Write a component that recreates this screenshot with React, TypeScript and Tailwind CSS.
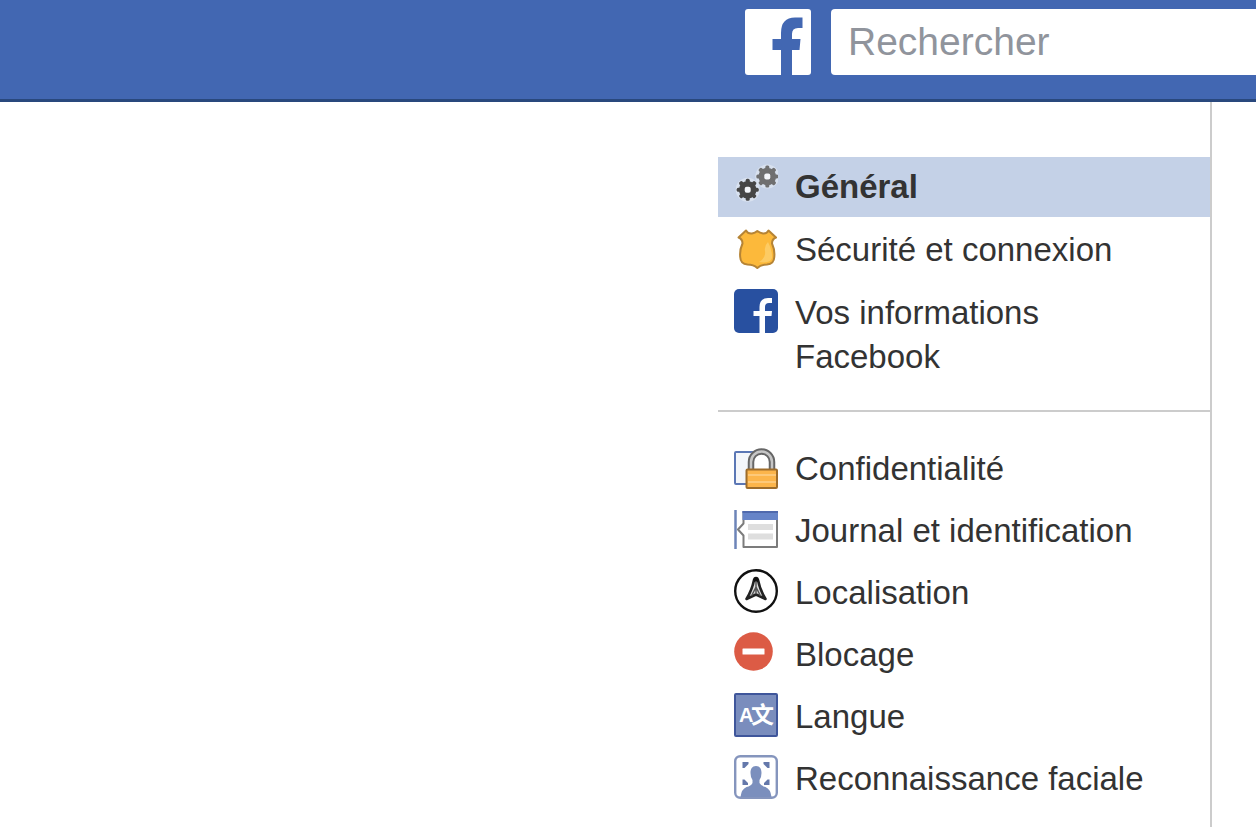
import { ComponentType } from 'react';

function GearsIcon() {
  const teeth = [0, 45, 90, 135];

  const gear = (cx: number, cy: number, color: string) => (
    <g transform={`translate(${cx} ${cy})`}>
      <circle r="12" fill="#fff" opacity="0.35" />
      <circle r="8.8" fill={color} />
      {teeth.map((deg) => (
        <rect
          key={deg}
          x="-2"
          y="-11"
          width="4"
          height="22"
          rx="1.5"
          fill={color}
          transform={`rotate(${deg})`}
        />
      ))}
      <rect x="-3" y="-3" width="6" height="6" rx="2" fill="#f4f6fa" />
    </g>
  );

  return (
    <>
      {gear(33.3, 13.5, '#6f6f70')}
      {gear(13.7, 26.7, '#464646')}
    </>
  );
}

function BadgeIcon() {
  return (
    <>
      <path
        d="M12 4.5 Q14 8 18 7.5 Q21 7 23.3 5 Q26 7 29 7.5 Q32.500 8 34.500 4.500 L42 11.500 Q38 13 38 17.500 Q41 24 40.300 31 Q40 38 33 38.500 Q27 38.500 23.300 42 Q19.500 38.500 13.500 38.500 Q6.500 38 6.200 31 Q5.500 24 8.500 17.500 Q8.500 13 4.500 11.500 Z"
        fill="#fcb93b"
        stroke="#b68435"
        strokeWidth="2"
        strokeLinejoin="round"
      />
      <path
        d="M34 16 Q38.500 25 38 32 Q37 36 30 36.500 L25 36 Q32 32 31 25 Q30 20 34 16 Z"
        fill="#fdcb63"
      />
    </>
  );
}

function FacebookIcon() {
  return (
    <>
      <rect width="44" height="44" rx="5" fill="#2850a0" />
      <path
        d="M25.500 44 V27 H19.500 V22 H25.500 V18 Q25.500 9 34 9 H38 V14 H35 Q31 14 31 18 V22 H38 L37.500 27 H31 V44 Z"
        fill="#fff"
      />
    </>
  );
}

function LockIcon() {
  return (
    <>
      <rect x="1" y="7" width="20" height="32" rx="1" fill="#f4f6fa" stroke="#5b77b5" strokeWidth="2" />
      <path d="M14 25 V16 A13.500 12 0 0 1 41 16 V25 Z" fill="#fff" />
      <path d="M17 25 V17 A10.500 10.500 0 0 1 38 17 V25" fill="none" stroke="#666" strokeWidth="6.500" />
      <path d="M17 24 V17 A10.500 10.500 0 0 1 38 17 V24" fill="none" stroke="#c6c6c6" strokeWidth="2.500" />
      <rect x="12.500" y="24.500" width="30.500" height="18.500" rx="1" fill="#fcb54b" stroke="#9d6c2b" strokeWidth="2" />
      <path d="M14 30 H42 M14 37 H42" stroke="#fdd08a" strokeWidth="1.500" />
    </>
  );
}

function JournalIcon() {
  return (
    <>
      <path d="M1.500 3 V42" stroke="#6d84b8" strokeWidth="2.500" />
      <path
        d="M9.500 5 H43 V40 H9.500 V28.500 L4 22.500 L9.500 16.500 Z"
        fill="#fff"
        stroke="#7c7c7c"
        strokeWidth="2"
        strokeLinejoin="round"
      />
      <path d="M8.500 4 H44 V13 H8.500 Z" fill="#6684c8" />
      <path d="M8.500 5 H44" stroke="#4f69ad" strokeWidth="2" />
      <path d="M14 20 H39 M14 29.500 H39" stroke="#dedede" strokeWidth="6" />
    </>
  );
}

function LocationIcon() {
  return (
    <>
      <circle cx="22" cy="22" r="20.800" fill="#fff" stroke="#111" strokeWidth="2.400" />
      <path
        d="M22 9.500 L20 11 Q18 21 12.500 30 L22 25.500 L31.500 30 Q26 21 24 11 Z"
        fill="#ddd"
        stroke="#222"
        strokeWidth="2.600"
        strokeLinejoin="round"
      />
      <circle cx="22" cy="10.500" r="2.800" fill="#111" />
      <path d="M22 12 V25 M22 18 L17.500 27 M22 18 L26.500 27" stroke="#555" strokeWidth="1.500" />
    </>
  );
}

function BlockIcon() {
  return (
    <>
      <circle cx="19.500" cy="20.500" r="19.300" fill="#dc5b45" />
      <rect x="8.500" y="17.500" width="22" height="6" rx="0.500" fill="#fff" />
    </>
  );
}

function LanguageIcon() {
  return (
    <>
      <rect x="1" y="1" width="42" height="42" rx="1" fill="#7a8dbd" stroke="#3f569b" strokeWidth="2" />
      <text
        x="5"
        y="29"
        fill="#fff"
        className="font-['Liberation_Sans',sans-serif] text-[20px] font-bold">
        A
      </text>
      <text
        x="17"
        y="30"
        fill="#fff"
        className="font-['Noto_Sans_CJK_SC',sans-serif] text-[23px] font-bold">
        文
      </text>
    </>
  );
}

function FaceIcon() {
  return (
    <>
      <rect x="1.200" y="1.200" width="41.600" height="41.600" rx="5" fill="#fff" stroke="#8595bd" strokeWidth="2.400" />
      <path
        d="M8.500 13 V7 H14.500 V9 L10.500 13 Z M35.500 13 V7 H29.500 V9 L33.500 13 Z M8.500 24.500 V30 H14 V28 L10.500 24.500 Z M35.500 24.500 V30 H30 V28 L33.500 24.500 Z"
        fill="#6478ab"
      />
      <path
        d="M22 11 C26 11 27.500 14 27.500 18 Q27.500 22.500 25.500 25 V28 Q27 31 31.500 32 Q36.500 34 37.500 42 H6.500 Q7.500 34 12.500 32 Q17 31 18.500 28 V25 Q16.500 22.500 16.500 18 C16.500 14 18 11 22 11 Z"
        fill="#7b8fbd"
      />
    </>
  );
}

interface MenuItem {
  label: string;
  icon: ComponentType;
  active?: boolean;
}

const accountItems: MenuItem[] = [
  { label: 'Général', icon: GearsIcon, active: true },
  { label: 'Sécurité et connexion', icon: BadgeIcon },
  { label: 'Vos informations Facebook', icon: FacebookIcon },
];

const privacyItems: MenuItem[] = [
  { label: 'Confidentialité', icon: LockIcon },
  { label: 'Journal et identification', icon: JournalIcon },
  { label: 'Localisation', icon: LocationIcon },
  { label: 'Blocage', icon: BlockIcon },
  { label: 'Langue', icon: LanguageIcon },
  { label: 'Reconnaissance faciale', icon: FaceIcon },
];

function MenuRow({ label, icon: Icon, active }: MenuItem) {
  return (
    <li>
      <a
        href="#"
        aria-current={active ? 'page' : undefined}
        className={
          active
            ? 'flex items-start gap-[17px] bg-[#c4d1e7] pt-1.5 pr-12 pb-2 pl-4 font-bold'
            : 'flex items-start gap-[17px] pt-1.5 pr-12 pb-2 pl-4'
        }>
        <svg
          viewBox="0 0 44 44"
          aria-hidden="true"
          className="h-11 w-11 shrink-0">
          <Icon />
        </svg>
        <span className="pt-0.5">{label}</span>
      </a>
    </li>
  );
}

export default function App() {
  return (
    <div className="flex min-h-screen flex-col bg-white font-['Liberation_Sans',Arial,sans-serif] text-[33px] leading-[44px] text-[#333]">
      <header className="border-b-[3px] border-[#29487d] bg-[#4267b2] pt-[9px] pb-6">
        <div className="ml-auto flex w-[511px] max-w-full gap-5">
          <a href="#" aria-label="Facebook" className="shrink-0">
            <svg viewBox="0 0 66 66" className="h-[66px] w-[66px]">
              <rect width="66" height="66" rx="3" fill="#fff" />
              <path
                d="M36 66 V41 H27.500 V30 H36 V24 Q36 8.500 50 8.500 H57.500 V19 H53 Q47 19 47 25 V30 H55.500 L54.500 41 H47 V66 Z"
                fill="#4267b2"
              />
            </svg>
          </a>
          <input
            type="text"
            aria-label="Rechercher"
            placeholder="Rechercher"
            className="h-[66px] min-w-0 flex-1 rounded-l bg-white px-[17px] text-[39px] outline-none placeholder:text-[#90949c]"
          />
        </div>
      </header>

      <main className="flex flex-1 justify-end pr-11">
        <aside className="w-[494px] max-w-full border-r-2 border-[#ccc] pt-[55px]">
          <nav aria-label="Paramètres">
            <ul className="flex flex-col gap-[3px]">
              {accountItems.map((item) => (
                <MenuRow key={item.label} {...item} />
              ))}
            </ul>
            <hr className="mt-[23px] mb-[27px] border-t-2 border-[#ccc]" />
            <ul className="flex flex-col gap-[2px]">
              {privacyItems.map((item) => (
                <MenuRow key={item.label} {...item} />
              ))}
            </ul>
          </nav>
        </aside>
      </main>
    </div>
  );
}
